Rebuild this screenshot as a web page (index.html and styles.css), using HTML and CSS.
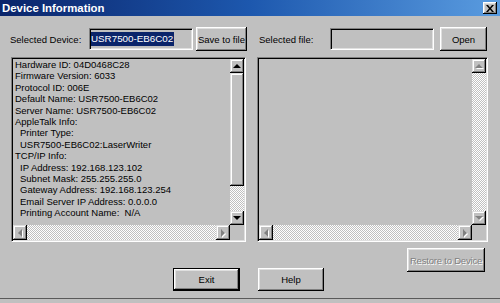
FILE: index.html
```html
<!DOCTYPE html>
<html lang="en">
<head>
  <meta charset="UTF-8">
  <title>Device Information</title>
  <link rel="stylesheet" href="styles.css">
</head>
<body>

  <div class="window">

    <!-- TITLE BAR -->
    <div class="titlebar">
      <span class="title">Device Information</span>
      <div class="close">
        <svg width="8" height="7" viewBox="0 0 8 7"><path d="M0 0h2l2 2.4L6 0h2L5 3.5 8 7H6L4 4.6 2 7H0l3-3.5z"/></svg>
      </div>
    </div>

    <!-- SELECTION ROW -->
    <div class="toprow">
      <span class="lbl lbl-dev">Selected Device:</span>
      <div class="field field-dev"><span class="sel">USR7500-EB6C02</span></div>
      <div class="btn btn-save">Save to file</div>
      <span class="lbl lbl-file">Selected file:</span>
      <div class="field field-file"></div>
      <div class="btn btn-open">Open</div>
    </div>

    <!-- LIST PANES -->
    <div class="panes">
      <div class="pane pane-left">
        <div class="list">
          <div>Hardware ID: 04D0468C28</div>
          <div>Firmware Version: 6033</div>
          <div>Protocol ID: 006E</div>
          <div>Default Name: USR7500-EB6C02</div>
          <div>Server Name: USR7500-EB6C02</div>
          <div>AppleTalk Info:</div>
          <div class="sub">Printer Type:</div>
          <div class="sub">USR7500-EB6C02:LaserWriter</div>
          <div>TCP/IP Info:</div>
          <div class="sub">IP Address: 192.168.123.102</div>
          <div class="sub">Subnet Mask: 255.255.255.0</div>
          <div class="sub">Gateway Address: 192.168.123.254</div>
          <div class="sub">Email Server IP Address: 0.0.0.0</div>
          <div class="sub">Printing Account Name:&nbsp; N/A</div>
        </div>
        <div class="vscroll">
          <div class="sbtn"><i class="arr up"></i></div>
          <div class="thumb"></div>
          <div class="track"></div>
          <div class="sbtn"><i class="arr down"></i></div>
        </div>
        <div class="hscroll">
          <div class="sbtn"><i class="arr left off"></i></div>
          <div class="track"></div>
          <div class="sbtn"><i class="arr right off"></i></div>
        </div>
        <div class="corner"></div>
      </div>

      <div class="pane pane-right">
        <div class="list"></div>
        <div class="vscroll">
          <div class="sbtn"><i class="arr up off"></i></div>
          <div class="track"></div>
          <div class="sbtn"><i class="arr down off"></i></div>
        </div>
        <div class="hscroll">
          <div class="sbtn"><i class="arr left off"></i></div>
          <div class="track"></div>
          <div class="sbtn"><i class="arr right off"></i></div>
        </div>
        <div class="corner"></div>
      </div>
    </div>

    <!-- BUTTONS -->
    <div class="restore-row">
      <div class="btn btn-restore disabled">Restore to Device</div>
    </div>
    <div class="actions">
      <div class="btn btn-exit default">Exit</div>
      <div class="btn btn-help">Help</div>
    </div>

  </div>

</body>
</html>
```

FILE: styles.css
```css
html, body {
  margin: 0;
  padding: 0;
  background: #c0c0c0;
}

body {
  width: 500px;
  height: 303px;
  overflow: hidden;
  font-family: "Liberation Sans", Arial, sans-serif;
  font-size: 9.5px;
  color: #000;
}

.window {
  height: 298px;
  border-bottom: 1px solid #5a5a5a;
}

/* Title bar */
.titlebar {
  height: 16px;
  display: flex;
  align-items: center;
  justify-content: space-between;
  padding: 0 3px 0 2px;
  background: linear-gradient(90deg, #0a246a 0%, #1d58ae 50%, #5a9ce0 100%);
}

.title {
  color: #fff;
  font-weight: bold;
  font-size: 11.4px;
}

.close {
  width: 14px;
  height: 12px;
  display: flex;
  align-items: center;
  justify-content: center;
  background: #c0c0c0;
  box-shadow: inset -1px -1px #000, inset 1px 1px #fff, inset -2px -2px #808080, inset 2px 2px #dfdfdf;
}

/* Raised button */
.btn {
  display: flex;
  align-items: center;
  justify-content: center;
  box-sizing: border-box;
  background: #c0c0c0;
  box-shadow: inset -1px -1px #000, inset 1px 1px #fff, inset -2px -2px #808080, inset 2px 2px #dfdfdf;
  white-space: nowrap;
}

.btn.default {
  border: 1px solid #000;
}

.btn.disabled {
  color: #808080;
  text-shadow: 1px 1px 0 #fff;
  letter-spacing: -0.2px;
}

/* Top row */
.toprow {
  display: flex;
  align-items: center;
  height: 24px;
  margin-top: 11px;
  padding-left: 10px;
}

.lbl-dev { width: 79px; }
.lbl-file { width: 71px; margin-left: 12px; }

.field {
  box-sizing: border-box;
  width: 104px;
  height: 22px;
  display: flex;
  align-items: center;
  border: 1px solid;
  border-color: #808080 #fff #fff #808080;
  box-shadow: inset 1px 1px #000, inset -1px -1px #dfdfdf;
  padding-left: 1px;
}

.sel {
  background: #0a246a;
  color: #fff;
  padding: 1px 1px 2px 0;
  font-size: 9.8px;
}

.btn-save { width: 51px; height: 24px; margin-left: 3px; }
.btn-open { width: 47px; height: 24px; margin-left: 6px; }

/* Panes */
.panes {
  display: flex;
  margin-top: 6px;
  padding-left: 11px;
  gap: 11px;
  height: 185px;
}

.pane {
  box-sizing: border-box;
  height: 185px;
  border: 1px solid;
  border-color: #808080 #fff #fff #808080;
  box-shadow: inset 1px 1px #000, inset -1px -1px #dfdfdf;
  padding: 1px;
  display: grid;
  grid-template-columns: 1fr 14px;
  grid-template-rows: 1fr 15px;
}

.pane-left { width: 235px; }
.pane-right { width: 231px; }

.list {
  overflow: hidden;
  padding: 0 2px;
  line-height: 11.4px;
  white-space: nowrap;
}

.list .sub { padding-left: 5px; }

.vscroll {
  display: flex;
  flex-direction: column;
}

.hscroll {
  display: flex;
}

.track {
  flex: 1;
  background: repeating-conic-gradient(#fff 0 25%, #c0c0c0 0 50%) 0 0 / 2px 2px;
}

.sbtn, .thumb {
  box-sizing: border-box;
  background: #c0c0c0;
  box-shadow: inset -1px -1px #000, inset 1px 1px #dfdfdf, inset -2px -2px #808080, inset 2px 2px #fff;
  display: flex;
  align-items: center;
  justify-content: center;
}

.vscroll .sbtn { height: 14px; }
.hscroll .sbtn { width: 14px; }
.thumb { height: 113px; }

.corner { background: #c0c0c0; }

/* Arrows */
.arr {
  width: 0;
  height: 0;
  color: #000;
}

.arr.up {
  border-left: 4px solid transparent;
  border-right: 4px solid transparent;
  border-bottom: 4px solid currentColor;
}

.arr.down {
  border-left: 4px solid transparent;
  border-right: 4px solid transparent;
  border-top: 4px solid currentColor;
}

.arr.left {
  border-top: 4px solid transparent;
  border-bottom: 4px solid transparent;
  border-right: 4px solid currentColor;
}

.arr.right {
  border-top: 4px solid transparent;
  border-bottom: 4px solid transparent;
  border-left: 4px solid currentColor;
}

.arr.off {
  color: #808080;
  filter: drop-shadow(1px 1px 0 #fff);
}

/* Footer */
.restore-row {
  display: flex;
  justify-content: flex-end;
  padding-right: 15px;
  margin-top: 6px;
}

.btn-restore { width: 78px; height: 24px; }

.actions {
  display: flex;
  gap: 18px;
  margin-top: -4px;
  padding-left: 173px;
}

.btn-exit { width: 67px; height: 23px; }
.btn-help { width: 66px; height: 23px; }
```
